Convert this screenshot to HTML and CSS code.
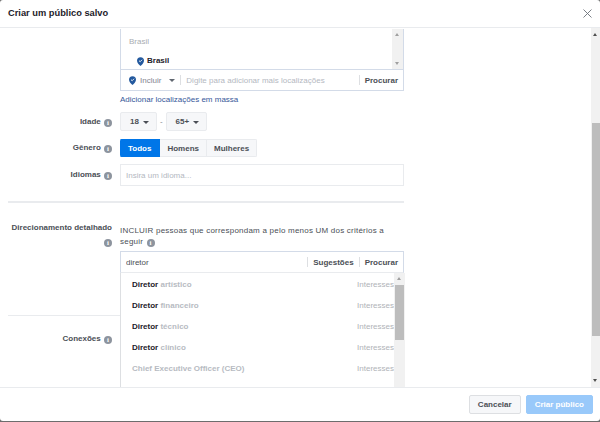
FILE: index.html
```html
<!DOCTYPE html>
<html lang="pt">
<head>
  <meta charset="UTF-8">
  <title>Criar um público salvo</title>
  <link rel="stylesheet" href="styles.css">
</head>
<body>
  <div class="modal">
    <div class="modal-header">
      <h1>Criar um público salvo</h1>
      <svg class="close" width="9" height="9" viewBox="0 0 9 9"><path d="M.5.500l8 8M8.500.500l-8 8" stroke="#6b7078" stroke-width=".9" fill="none"/></svg>
    </div>

    <div class="modal-body">
      <div class="form">
        <div class="row loc-row">
          <div class="label"></div>
          <div class="field">
            <div class="loc-box">
              <div class="loc-list">
                <div class="loc-items">
                  <div class="loc-country">Brasil</div>
                  <div class="loc-city">
                    <svg class="pin" width="7" height="9" viewBox="0 0 8 10"><path d="M4 0a4 4 0 0 1 4 4c0 2.400-2.400 4.600-4 6C2.400 8.600 0 6.400 0 4a4 4 0 0 1 4-4z" fill="#23599e"/><path d="M2.300 4l1.300 1.300L5.800 3" stroke="#fff" fill="none"/></svg>
                    Brasil
                  </div>
                </div>
                <div class="mini-scroll">
                  <span class="arrow-up"></span>
                  <span class="arrow-down"></span>
                </div>
              </div>
              <div class="loc-input">
                <svg class="pin" width="7" height="9" viewBox="0 0 8 10"><path d="M4 0a4 4 0 0 1 4 4c0 2.400-2.400 4.600-4 6C2.400 8.600 0 6.400 0 4a4 4 0 0 1 4-4z" fill="#23599e"/><path d="M2.300 4l1.300 1.300L5.800 3" stroke="#fff" fill="none"/></svg>
                <span class="incluir">Incluir</span>
                <span class="caret"></span>
                <span class="sep"></span>
                <span class="placeholder grow">Digite para adicionar mais localizações</span>
                <span class="sep"></span>
                <span class="action">Procurar</span>
              </div>
            </div>
            <a class="link">Adicionar localizações em massa</a>
          </div>
        </div>

        <div class="row age-row">
          <div class="label">Idade <i class="info">i</i></div>
          <div class="field inline">
            <button class="btn">18<span class="caret dark"></span></button>
            <span class="dash">-</span>
            <button class="btn">65+<span class="caret dark"></span></button>
          </div>
        </div>

        <div class="row gender-row">
          <div class="label">Gênero <i class="info">i</i></div>
          <div class="field inline">
            <div class="seg">
              <span class="seg-item active">Todos</span>
              <span class="seg-item">Homens</span>
              <span class="seg-item">Mulheres</span>
            </div>
          </div>
        </div>

        <div class="row lang-row">
          <div class="label">Idiomas <i class="info">i</i></div>
          <div class="field">
            <div class="text-input placeholder">Insira um idioma...</div>
          </div>
        </div>

        <hr class="divider">

        <div class="row detail-row">
          <div class="label">Direcionamento detalhado <i class="info block">i</i></div>
          <div class="field">
            <p class="hint">INCLUIR pessoas que correspondam a pelo menos UM dos critérios a seguir <i class="info">i</i></p>
            <div class="search">
              <span class="grow">diretor</span>
              <span class="sep"></span>
              <span class="action">Sugestões</span>
              <span class="sep"></span>
              <span class="action">Procurar</span>
            </div>
            <div class="dropdown">
              <ul class="results">
                <li><span><b>Diretor</b> artístico</span><em>Interesses</em></li>
                <li><span><b>Diretor</b> financeiro</span><em>Interesses</em></li>
                <li><span><b>Diretor</b> técnico</span><em>Interesses</em></li>
                <li><span><b>Diretor</b> clínico</span><em>Interesses</em></li>
                <li><span>Chief Executive Officer (CEO)</span><em>Interesses</em></li>
                <li><span><b>Diretor</b> de arte</span><em>Interesses</em></li>
              </ul>
              <div class="drop-scroll">
                <span class="arrow-up"></span>
                <div class="drop-thumb"></div>
              </div>
            </div>
          </div>
        </div>

        <hr class="thin">

        <div class="row conn-row">
          <div class="label">Conexões <i class="info">i</i></div>
        </div>
      </div>

      <div class="scrollbar">
        <span class="arrow-up dark"></span>
        <div class="thumb"></div>
        <span class="arrow-down dark"></span>
      </div>
    </div>

    <div class="modal-footer">
      <button class="foot-btn">Cancelar</button>
      <button class="foot-btn primary">Criar público</button>
    </div>
  </div>
</body>
</html>
```

FILE: styles.css
```css
* {
  margin: 0;
  padding: 0;
  box-sizing: border-box;
}

body {
  width: 600px;
  height: 422px;
  background: #6d6d6d;
  font-family: "Liberation Sans", Arial, sans-serif;
  font-size: 8px;
  color: #4b4f56;
  overflow: hidden;
}

.modal {
  height: 421px;
  background: #fff;
  border-radius: 3px;
  display: flex;
  flex-direction: column;
}

.modal-header {
  height: 28px;
  flex: none;
  display: flex;
  align-items: center;
  justify-content: space-between;
  padding: 0 8px 1px 8px;
  border-bottom: 1px solid #e9ebee;
}

.modal-header h1 {
  font-size: 9.3px;
  font-weight: bold;
  color: #1d2129;
}

.modal-body {
  height: 359px;
  flex: none;
  display: flex;
  overflow: hidden;
}

.form {
  flex: 1;
  padding: 1px 187px 0 8px;
  overflow: hidden;
}

.row {
  display: flex;
}

.label {
  width: 104px;
  flex: none;
  margin-right: 8px;
  text-align: right;
  white-space: nowrap;
  font-weight: bold;
  color: #4b4f56;
  line-height: 12px;
}

.field {
  flex: 1;
  min-width: 0;
  position: relative;
}

.inline {
  display: flex;
  align-items: center;
}

.info {
  display: inline-block;
  width: 8px;
  height: 8px;
  margin-left: 1px;
  border-radius: 50%;
  background: #8d949e;
  color: #fff;
  font: bold 7px/8px "Liberation Serif", serif;
  text-align: center;
  vertical-align: -1px;
}

.info.block {
  display: block;
  margin: 5px 0 0 auto;
}

.loc-box {
  border: 1px solid #d3dbe8;
  border-top: 0;
}

.loc-list {
  height: 41px;
  display: flex;
  border-bottom: 1px solid #d3dbe8;
}

.loc-items {
  flex: 1;
  padding: 7px 8px;
}

.loc-country {
  color: #a8acb2;
  line-height: 12px;
}

.loc-city {
  margin: 7px 0 0 8px;
  display: flex;
  align-items: center;
  gap: 3px;
  font-weight: bold;
  color: #1d2129;
  line-height: 12px;
}

.mini-scroll {
  width: 11px;
  background: #f1f1f1;
  position: relative;
}

.arrow-up,
.arrow-down {
  position: absolute;
  left: 3px;
  width: 0;
  height: 0;
  border-left: 2.5px solid transparent;
  border-right: 2.5px solid transparent;
}

.arrow-up {
  top: 4px;
  border-bottom: 3px solid #a0a0a0;
}

.arrow-down {
  bottom: 4px;
  border-top: 3px solid #a0a0a0;
}

.arrow-up.dark {
  top: 5px;
  left: 2px;
  border-bottom-color: #505050;
}

.arrow-down.dark {
  bottom: 5px;
  left: 2px;
  border-top-color: #505050;
}

.loc-input {
  height: 20px;
  display: flex;
  align-items: center;
  padding: 0 5px 0 8px;
}

.incluir {
  margin-left: 4px;
  color: #7f8590;
}

.caret {
  display: inline-block;
  width: 0;
  height: 0;
  margin-left: 8px;
  border-left: 3px solid transparent;
  border-right: 3px solid transparent;
  border-top: 3px solid #606770;
}

.caret.dark {
  margin-left: 4px;
  vertical-align: 0;
  border-top-color: #4b4f56;
}

.sep {
  width: 1px;
  height: 10px;
  flex: none;
  background: #dddfe2;
  margin: 0 5px;
}

.placeholder {
  color: #b4b8bf;
}

.grow {
  flex: 1;
  white-space: nowrap;
  overflow: hidden;
}

.action {
  font-weight: bold;
  color: #4b4f56;
}

.link {
  display: block;
  margin-top: 3px;
  color: #365899;
  line-height: 12px;
}

.age-row {
  margin-top: 6px;
  height: 19px;
  align-items: center;
}

.btn {
  height: 19px;
  padding: 0 7px 0 9px;
  border: 1px solid #e9ebee;
  border-radius: 2px;
  background: #f6f7f9;
  font: bold 8px "Liberation Sans", Arial, sans-serif;
  color: #4b4f56;
}

.dash {
  margin: 0 3px;
  color: #7f8590;
}

.gender-row {
  margin-top: 8px;
  height: 18px;
  align-items: center;
}

.seg {
  display: flex;
  height: 18px;
  border-radius: 2px;
  overflow: hidden;
}

.seg-item {
  display: flex;
  align-items: center;
  padding: 0 7px;
  background: #f6f7f9;
  border: 1px solid #e9ebee;
  border-left: 0;
  font-weight: bold;
  color: #4b4f56;
}

.seg-item.active {
  padding: 0 8px;
  background: #0076e8;
  border-color: #0076e8;
  color: #fff;
}

.lang-row {
  margin-top: 7px;
}

.lang-row .label {
  padding-top: 5px;
}

.text-input {
  height: 22px;
  line-height: 21px;
  padding: 0 5px;
  border: 1px solid #e9ebee;
}

.divider {
  height: 2px;
  margin-top: 15px;
  border: 0;
  background: #e9ebee;
}

.detail-row {
  margin-top: 19px;
  height: 51px;
}

.hint {
  line-height: 11px;
  color: #4b4f56;
  letter-spacing: 0.22px;
  margin-top: 3px;
  height: 26px;
}

.search {
  height: 22px;
  display: flex;
  align-items: center;
  padding: 0 5px;
  border: 1px solid #d3dbe8;
  border-bottom: 1px solid #e9ebee;
  color: #4b4f56;
}

.dropdown {
  position: absolute;
  top: 51px;
  left: 0;
  right: -1px;
  height: 130px;
  display: flex;
  background: #fff;
  border-left: 1px solid #dddfe2;
}

.results {
  flex: 1;
  list-style: none;
  padding-top: 1px;
  overflow: hidden;
}

.results li {
  height: 21px;
  display: flex;
  align-items: center;
  justify-content: space-between;
  padding-left: 11px;
  white-space: nowrap;
  font-weight: bold;
  color: #b7bbc2;
}

.results b {
  color: #1d2129;
}

.results em {
  font-style: normal;
  font-weight: normal;
  color: #b0b3b8;
}

.drop-scroll {
  width: 11px;
  flex: none;
  background: #f1f1f1;
  position: relative;
}

.drop-thumb {
  margin: 12px 0 0 1px;
  width: 9px;
  height: 55px;
  background: #bdbdbd;
}

.thin {
  height: 1px;
  margin-top: 42px;
  border: 0;
  background: #e9ebee;
}

.conn-row {
  margin-top: 17px;
}

.scrollbar {
  width: 9px;
  flex: none;
  background: #f1f1f1;
  position: relative;
}

.thumb {
  margin: 95px 0 0 1px;
  width: 8px;
  height: 213px;
  background: #bdbdbd;
}

.modal-footer {
  flex: 1;
  display: flex;
  justify-content: flex-end;
  align-items: flex-start;
  gap: 5px;
  padding: 7px 7px 0 0;
  border-top: 1px solid #e9ebee;
}

.foot-btn {
  height: 19px;
  padding: 0 8px;
  border: 1px solid #dddfe2;
  border-radius: 2px;
  background: #f6f7f9;
  font: bold 8px "Liberation Sans", Arial, sans-serif;
  color: #4b4f56;
}

.foot-btn.primary {
  background: #99c9fa;
  border-color: #99c9fa;
  color: #fff;
}
```
